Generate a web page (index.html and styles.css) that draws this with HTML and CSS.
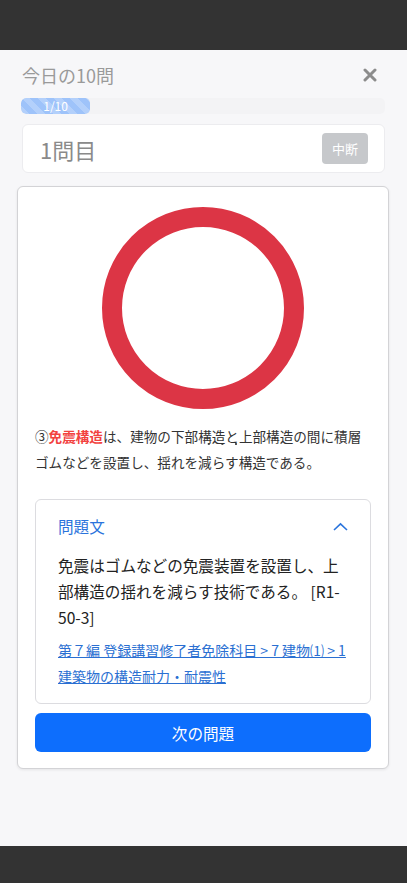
FILE: index.html
```html
<!DOCTYPE html>
<html lang="ja">
<head>
  <meta charset="UTF-8">
  <meta name="viewport" content="width=device-width, initial-scale=1.0">
  <title>今日の10問</title>
  <link rel="stylesheet" href="styles.css">
</head>
<body>
  <div class="topbar"></div>

  <main class="screen">
    <div class="title-row">
      <h1>今日の10問</h1>
      <button class="close-btn" aria-label="閉じる">
        <svg width="14" height="14" viewBox="0 0 14 14">
          <path d="M2 2 L12 12 M12 2 L2 12" stroke="#8c8c8c" stroke-width="3" stroke-linecap="round"/>
        </svg>
      </button>
    </div>

    <div class="progress">
      <div class="progress-bar" style="width: 19%">1/10</div>
    </div>

    <div class="question-head">
      <span class="question-no">1問目</span>
      <button class="stop-btn">中断</button>
    </div>

    <div class="card">
      <div class="result-mark">
        <svg width="202" height="202" viewBox="0 0 202 202">
          <circle cx="101" cy="101" r="91" fill="none" stroke="#dc3545" stroke-width="20"/>
        </svg>
      </div>

      <p class="answer">③<strong>免震構造</strong>は、建物の下部<span class="dots">構造と</span>上部構造の間に積層ゴムなどを設置し、揺れを減らす構造である。</p>

      <div class="panel">
        <div class="panel-head">
          <span>問題文</span>
          <svg width="15" height="9" viewBox="0 0 15 9">
            <path d="M1 8 L7.5 1.8 L14 8" fill="none" stroke="#2a74dc" stroke-width="1.6"/>
          </svg>
        </div>
        <p class="panel-text">免震はゴムなどの免震装置を設置し、上部構造の揺れを減らす技術である。 [R1-<wbr>50-3]</p>
        <a class="panel-link" href="#">第７編 登録講習修了者免除科目 &gt; 7 建物⑴ &gt; 1 建築物の構造耐力・耐震性</a>
      </div>

      <button class="next-btn">次の問題</button>
    </div>
  </main>

  <div class="bottombar"></div>
</body>
</html>
```

FILE: styles.css
```css
* {
  box-sizing: border-box;
}
html, body {
  height: 100%;
}
body {
  margin: 0;
  display: flex;
  flex-direction: column;
  font-family: "Noto Sans CJK JP", "Noto Sans", sans-serif;
  background-color: #f7f7f9;
  color: #222;
}
.topbar {
  height: 50px;
  background-color: #333;
  flex-shrink: 0;
}
.bottombar {
  height: 37px;
  background-color: #333;
  flex-shrink: 0;
}
.screen {
  flex: 1;
  padding: 12px 18px 0 17px;
}
.title-row {
  display: flex;
  justify-content: space-between;
  align-items: center;
  height: 26px;
  padding: 0 12px 0 5px;
}
h1 {
  margin: 0;
  font-size: 18px;
  font-weight: 400;
  color: #9a9a9a;
  line-height: 26px;
}
.close-btn {
  border: none;
  background: none;
  padding: 0;
  display: flex;
}
.progress {
  margin: 10px 4px 0 4px;
  height: 16px;
  background-color: #f3f3f5;
  border-radius: 5px;
  overflow: hidden;
}
.progress-bar {
  height: 100%;
  border-radius: 5px;
  background-color: #9ec3fa;
  background-image: linear-gradient(45deg, rgba(255,255,255,.22) 25%, transparent 25%, transparent 50%, rgba(255,255,255,.22) 50%, rgba(255,255,255,.22) 75%, transparent 75%, transparent);
  background-size: 16px 16px;
  color: #fff;
  font-size: 12px;
  line-height: 16px;
  text-align: center;
}
.question-head {
  margin: 10px 4px 0 5px;
  height: 49px;
  background-color: #fff;
  border: 1px solid #ececef;
  border-radius: 6px;
  display: flex;
  align-items: center;
  justify-content: space-between;
  padding: 0 16px 0 17px;
}
.question-no {
  font-size: 22px;
  color: #8a8a8a;
}
.stop-btn {
  width: 46px;
  height: 31px;
  border: none;
  border-radius: 4px;
  background-color: #c6c8cb;
  color: #fff;
  font-family: inherit;
  font-size: 13px;
  padding: 0;
}
.card {
  margin-top: 13px;
  background-color: #fff;
  border: 1px solid #d3d3d6;
  border-radius: 6px;
  box-shadow: 0 1px 3px rgba(0,0,0,0.08);
  padding: 20px 17px 16px 17px;
}
.result-mark {
  display: flex;
  justify-content: center;
}
.result-mark svg {
  display: block;
}
.answer {
  margin: 14px 0 0 0;
  font-size: 13.6px;
  line-height: 26px;
  color: #333;
}
.answer strong {
  color: #f2423f;
}
.dots {
  background-image: radial-gradient(circle, #555 0.9px, transparent 1.3px);
  background-repeat: repeat-x;
  background-size: 13.6px 4px;
  background-position: 4px 100%;
}
.panel {
  margin-top: 24px;
  border: 1px solid #dcdce0;
  border-radius: 6px;
  padding: 13px 22px 14px 22px;
}
.panel-head {
  display: flex;
  justify-content: space-between;
  align-items: center;
  height: 26px;
  font-size: 15.6px;
  color: #2a74dc;
}
.panel-text {
  margin: 13px 0 0 0;
  font-size: 15.6px;
  line-height: 26px;
  color: #222;
}
.panel-link {
  display: block;
  margin-top: 7px;
  font-size: 14px;
  line-height: 26px;
  color: #2a6fd2;
}
.next-btn {
  display: block;
  width: 100%;
  margin-top: 9px;
  height: 39px;
  border: none;
  border-radius: 6px;
  background-color: #0d6efd;
  color: #fff;
  font-family: inherit;
  font-size: 15.6px;
}
```
